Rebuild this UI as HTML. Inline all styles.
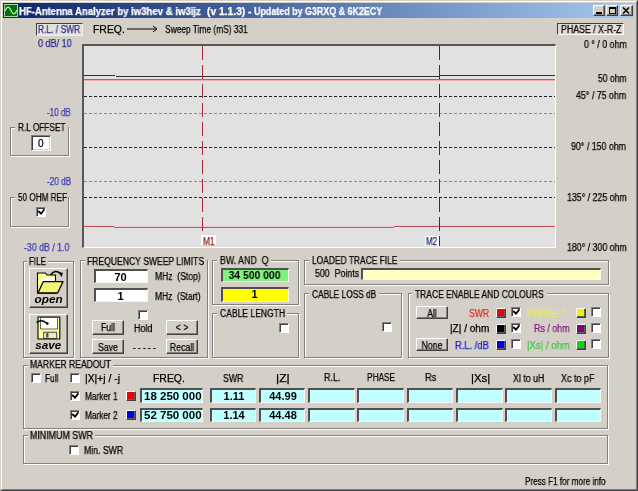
<!DOCTYPE html>
<html><head><meta charset="utf-8"><style>
*{box-sizing:border-box;margin:0;padding:0}
html,body{width:638px;height:491px;overflow:hidden;background:#d4d0c8;font-family:"Liberation Sans",sans-serif;font-size:10px;color:#000}
.a{position:absolute}
.L{position:absolute;white-space:pre;font-size:10px;line-height:12px;transform-origin:0 0;-webkit-text-stroke:0.25px currentColor;will-change:transform}
.g{position:absolute;border:1px solid #808080;box-shadow:inset 1px 1px 0 #fff,1px 1px 0 #fff}
.gb{position:absolute;background:#d4d0c8;height:4px}
.sk{position:absolute;border-top:1px solid #808080;border-left:1px solid #808080;border-right:1px solid #fff;border-bottom:1px solid #fff;box-shadow:inset 1px 1px 0 #404040,inset -1px -1px 0 #d4d0c8}
.btn{position:absolute;background:#d4d0c8;border-top:1px solid #fff;border-left:1px solid #fff;border-right:1px solid #404040;border-bottom:1px solid #404040;box-shadow:inset -1px -1px 0 #808080}
.cb{position:absolute;width:10px;height:10px;background:#fff;border-top:1px solid #808080;border-left:1px solid #808080;border-right:1px solid #fff;border-bottom:1px solid #fff;box-shadow:inset 1px 1px 0 #404040}
.sw{position:absolute;width:10px;height:10px;border-top:1px solid #fff;border-left:1px solid #fff;border-right:1px solid #404040;border-bottom:1px solid #404040;box-shadow:inset -1px -1px 0 #606060}
.tb{position:absolute;top:5px;height:11px;background:#d4d0c8;border-top:1px solid #fff;border-left:1px solid #fff;border-right:1px solid #404040;border-bottom:1px solid #404040;box-shadow:inset -1px -1px 0 #808080}
.ed{position:absolute;border-top:2px solid #505050;border-left:2px solid #505050;border-bottom:1px solid #f4f4f4;border-right:1px solid #f4f4f4;background:#c0ffff}
.bt{position:absolute;white-space:pre;font-weight:bold;font-size:11px;line-height:12px;text-align:center;will-change:transform}
</style></head><body>
<div class="a" style="left:0;top:0;width:638px;height:491px;border-top:1px solid #d4d0c8;border-left:1px solid #d4d0c8;border-right:1px solid #404040;border-bottom:1px solid #404040"></div>
<div class="a" style="left:1px;top:1px;width:636px;height:489px;border-top:1px solid #fff;border-left:1px solid #fff;border-right:1px solid #808080;border-bottom:1px solid #808080"></div>
<div class="a" style="left:3px;top:3px;width:631px;height:15px;background:linear-gradient(to right,#0a246a,#a6caf0)"></div>
<div class="a" style="left:4px;top:4px;width:14px;height:13px;background:#0b6a12;border:1px solid #9fd8a0"><svg class="a" style="left:0;top:0" width="12" height="11" viewBox="0 0 12 11"><path d="M0 6 C2 1,4 1,6 5.5 S10 10,12 5" stroke="#9cff7a" stroke-width="1.3" fill="none"/></svg></div>
<div class="tb" style="left:593px;width:12px"></div><div class="tb" style="left:606px;width:12px"></div><div class="tb" style="left:620px;width:13px"></div>
<svg class="a" style="left:593px;top:5px" width="40" height="11"><rect x="3" y="7" width="6" height="2" fill="#000"/><rect x="16.5" y="2.5" width="6" height="6" fill="none" stroke="#000"/><rect x="16" y="2" width="7" height="2" fill="#000"/><path d="M30 2.5 L36 8.5 M36 2.5 L30 8.5" stroke="#000" stroke-width="1.5"/></svg>
<div class="a" style="left:36px;top:23px;width:47px;height:13px;border-top:1px solid #404040;border-left:1px solid #404040;border-right:1px solid #f0f0f0;border-bottom:1px solid #f0f0f0;background:#e4e2dc"></div>
<div class="a" style="left:557px;top:23px;width:67px;height:12px;border-top:1px solid #404040;border-left:1px solid #404040;border-right:1px solid #fff;border-bottom:1px solid #fff;background:#dedad4"></div>
<svg class="a" style="left:126px;top:25px" width="34" height="8"><path d="M1 4 H31 M27 1 L31 4 L27 7" stroke="#000" stroke-width="1" fill="none"/></svg>
<div class="a" style="left:82px;top:44px;width:474px;height:204px;background:#e1e1e1;border-top:2px solid #5a5656;border-left:2px solid #5a5656;border-right:1px solid #fff;border-bottom:1px solid #fff"></div>
<svg class="a" style="left:0;top:0" width="638" height="491"><g stroke-width="1" shape-rendering="crispEdges">
<line x1="84" y1="96.5" x2="555" y2="96.5" stroke="#202020" stroke-dasharray="3 2"/>
<line x1="84" y1="147.5" x2="555" y2="147.5" stroke="#202020" stroke-dasharray="3 2"/>
<line x1="84" y1="197.5" x2="555" y2="197.5" stroke="#202020" stroke-dasharray="3 2"/>
<line x1="84" y1="113.5" x2="555" y2="113.5" stroke="#8080e0" stroke-dasharray="3 2"/>
<line x1="84" y1="181.5" x2="555" y2="181.5" stroke="#8080e0" stroke-dasharray="3 2"/>
<path d="M84 75.5 H115 M116 76.5 H439 M440 75.5 H555" stroke="#303030"/>
<line x1="84" y1="79.5" x2="555" y2="79.5" stroke="#a86868"/><line x1="84" y1="80.5" x2="555" y2="80.5" stroke="#e8b0b0"/>
<path d="M84 226.5 H114 M114 227.5 H394 M394 226.5 H555" stroke="#c85060"/><path d="M84 225.5 H114 M114 226.5 H394 M394 225.5 H555" stroke="#f0c8d0"/>
<line x1="202.5" y1="46" x2="202.5" y2="234" stroke="#a82838" stroke-dasharray="14 5"/>
<line x1="439.5" y1="46" x2="439.5" y2="234" stroke="#2020c0" stroke-dasharray="14 5"/>
<line x1="439.5" y1="236" x2="439.5" y2="246" stroke="#2020a0"/>
</g></svg>
<div class="a" style="left:201px;top:235px;width:15px;height:10px;background:#fff"></div>
<div class="a" style="left:425px;top:236px;width:14px;height:10px;background:#fff"></div>
<div class="g" style="left:10px;top:127px;width:59px;height:29px"></div><div class="gb" style="left:15px;top:126px;width:53px"></div>
<div class="sk" style="left:31px;top:135px;width:20px;height:16px;background:#fff"></div>
<div class="g" style="left:10px;top:197px;width:59px;height:30px"></div><div class="gb" style="left:15px;top:196px;width:53px"></div>
<div class="cb" style="left:36px;top:207px"></div><svg class="a" style="left:37px;top:208px" width="8" height="8"><path d="M1.2 3 L4 5.7 L7.4 1.2" stroke="#000" stroke-width="1.8" fill="none"/></svg>
<div class="g" style="left:23px;top:261px;width:51px;height:97px"></div><div class="gb" style="left:27px;top:260px;width:21px"></div>
<div class="btn" style="left:29px;top:268px;width:39px;height:40px"></div>
<div class="btn" style="left:29px;top:314px;width:39px;height:40px"></div>
<div class="g" style="left:80px;top:260px;width:128px;height:98px"></div><div class="gb" style="left:85px;top:259px;width:122px"></div>
<div class="ed" style="left:94px;top:269px;width:54px;height:14px;background:#fff"></div>
<div class="ed" style="left:94px;top:288px;width:54px;height:14px;background:#fff"></div>
<div class="cb" style="left:138px;top:310px"></div>
<div class="btn" style="left:92px;top:320px;width:32px;height:15px"></div>
<div class="btn" style="left:166px;top:320px;width:32px;height:15px"></div>
<div class="btn" style="left:92px;top:339px;width:32px;height:15px"></div>
<div class="btn" style="left:166px;top:339px;width:32px;height:15px"></div>
<div class="g" style="left:212px;top:260px;width:87px;height:45px"></div><div class="gb" style="left:217px;top:259px;width:54px"></div>
<div class="ed" style="left:221px;top:268px;width:68px;height:14px;background:#80f080"></div>
<div class="ed" style="left:221px;top:287px;width:68px;height:15px;background:#ffff00"></div>
<div class="g" style="left:212px;top:313px;width:87px;height:45px"></div><div class="gb" style="left:217px;top:312px;width:70px"></div>
<div class="cb" style="left:279px;top:323px"></div>
<div class="g" style="left:304px;top:260px;width:305px;height:25px"></div><div class="gb" style="left:309px;top:259px;width:91px"></div>
<div class="ed" style="left:361px;top:268px;width:240px;height:12px;background:#ffffc0"></div>
<div class="g" style="left:304px;top:293px;width:98px;height:65px"></div><div class="gb" style="left:309px;top:292px;width:70px"></div>
<div class="cb" style="left:382px;top:322px"></div>
<div class="g" style="left:408px;top:293px;width:201px;height:65px"></div><div class="gb" style="left:412px;top:292px;width:135px"></div>
<div class="btn" style="left:416px;top:306px;width:32px;height:13px"></div>
<div class="btn" style="left:416px;top:338px;width:32px;height:13px"></div>
<div class="sw" style="left:496px;top:308px;background:#f00000"></div>
<div class="cb" style="left:511px;top:307px"></div><svg class="a" style="left:512px;top:308px" width="8" height="8"><path d="M1.2 3 L4 5.7 L7.4 1.2" stroke="#000" stroke-width="1.8" fill="none"/></svg>
<div class="sw" style="left:576px;top:308px;background:#f0f000"></div>
<div class="cb" style="left:591px;top:307px"></div>
<div class="sw" style="left:496px;top:324px;background:#000"></div>
<div class="cb" style="left:511px;top:323px"></div><svg class="a" style="left:512px;top:324px" width="8" height="8"><path d="M1.2 3 L4 5.7 L7.4 1.2" stroke="#000" stroke-width="1.8" fill="none"/></svg>
<div class="sw" style="left:576px;top:324px;background:#800080"></div>
<div class="cb" style="left:591px;top:323px"></div>
<div class="sw" style="left:496px;top:340px;background:#0000f0"></div>
<div class="cb" style="left:511px;top:339px"></div>
<div class="sw" style="left:576px;top:340px;background:#00e000"></div>
<div class="cb" style="left:591px;top:339px"></div>
<div class="g" style="left:23px;top:365px;width:585px;height:64px"></div><div class="gb" style="left:28px;top:364px;width:85px"></div>
<div class="cb" style="left:31px;top:373px"></div>
<div class="cb" style="left:70px;top:373px"></div>
<div class="cb" style="left:70px;top:391px"></div><svg class="a" style="left:71px;top:392px" width="8" height="8"><path d="M1.2 3 L4 5.7 L7.4 1.2" stroke="#000" stroke-width="1.8" fill="none"/></svg>
<div class="cb" style="left:70px;top:410px"></div><svg class="a" style="left:71px;top:411px" width="8" height="8"><path d="M1.2 3 L4 5.7 L7.4 1.2" stroke="#000" stroke-width="1.8" fill="none"/></svg>
<div class="sw" style="left:126px;top:391px;background:#f00000"></div>
<div class="sw" style="left:126px;top:410px;background:#0000f0"></div>
<div class="ed" style="left:140px;top:388px;width:63px;height:15px;background:#c0ffff"></div>
<div class="ed" style="left:140px;top:408px;width:63px;height:14px;background:#c0ffff"></div>
<div class="ed" style="left:210px;top:388px;width:46px;height:15px;background:#c0ffff"></div>
<div class="ed" style="left:210px;top:408px;width:46px;height:14px;background:#c0ffff"></div>
<div class="ed" style="left:259px;top:388px;width:46px;height:15px;background:#c0ffff"></div>
<div class="ed" style="left:259px;top:408px;width:46px;height:14px;background:#c0ffff"></div>
<div class="ed" style="left:308px;top:388px;width:47px;height:15px;background:#c0ffff"></div>
<div class="ed" style="left:308px;top:408px;width:47px;height:14px;background:#c0ffff"></div>
<div class="ed" style="left:357px;top:388px;width:47px;height:15px;background:#c0ffff"></div>
<div class="ed" style="left:357px;top:408px;width:47px;height:14px;background:#c0ffff"></div>
<div class="ed" style="left:407px;top:388px;width:46px;height:15px;background:#c0ffff"></div>
<div class="ed" style="left:407px;top:408px;width:46px;height:14px;background:#c0ffff"></div>
<div class="ed" style="left:456px;top:388px;width:47px;height:15px;background:#c0ffff"></div>
<div class="ed" style="left:456px;top:408px;width:47px;height:14px;background:#c0ffff"></div>
<div class="ed" style="left:505px;top:388px;width:47px;height:15px;background:#c0ffff"></div>
<div class="ed" style="left:505px;top:408px;width:47px;height:14px;background:#c0ffff"></div>
<div class="ed" style="left:555px;top:388px;width:46px;height:15px;background:#c0ffff"></div>
<div class="ed" style="left:555px;top:408px;width:46px;height:14px;background:#c0ffff"></div>
<div class="g" style="left:23px;top:435px;width:585px;height:29px"></div><div class="gb" style="left:28px;top:434px;width:67px"></div>
<div class="cb" style="left:69px;top:445px"></div>
<div class="bt" style="left:93px;top:271px;width:55px">70</div>
<div class="bt" style="left:93px;top:290px;width:55px">1</div>
<div class="bt" style="left:221px;top:269px;width:67px;transform:scaleX(.94)">34 500 000</div>
<div class="bt" style="left:221px;top:288px;width:67px">1</div>
<div class="L" style="left:38px;top:138px">0</div>
<div class="L" style="left:92px;top:322px;width:32px;text-align:center;transform:scaleX(.87);transform-origin:50% 0">Full</div>
<div class="L" style="left:166px;top:322px;width:32px;text-align:center;transform:scaleX(.87);transform-origin:50% 0">&lt; ></div>
<div class="L" style="left:92px;top:342px;width:32px;text-align:center;transform:scaleX(.87);transform-origin:50% 0">Save</div>
<div class="L" style="left:166px;top:342px;width:32px;text-align:center;transform:scaleX(.87);transform-origin:50% 0">Recall</div>
<div class="L" style="left:416px;top:308px;width:32px;text-align:center;transform:scaleX(.87);transform-origin:50% 0">All</div>
<div class="L" style="left:416px;top:340px;width:32px;text-align:center;transform:scaleX(.87);transform-origin:50% 0">None</div>
<div class="bt" style="left:143.5px;top:390px;font-size:11.5px;line-height:13px">18 250 000</div>
<div class="bt" style="left:143.5px;top:409px;font-size:11.5px;line-height:13px">52 750 000</div>
<div class="bt" style="left:211px;top:390px;width:46px">1.11</div>
<div class="bt" style="left:211px;top:409px;width:46px">1.14</div>
<div class="bt" style="left:260px;top:390px;width:46px">44.99</div>
<div class="bt" style="left:260px;top:409px;width:46px">44.48</div>
<svg class="a" style="left:30px;top:269px;will-change:transform" width="38" height="38">
<path d="M7.5 4 h8 l1.5 2 h8.5 v18 h-18 z" fill="#ffff98" stroke="#000" stroke-width="1.1"/>
<path d="M11 8.5 h13.5 v4.5 h-13.5z" fill="#fff"/>
<path d="M8 24 L13.2 12.7 H33 L27.6 24 Z" fill="#f4f478" stroke="#000" stroke-width="1.3" stroke-linejoin="round"/>
<path d="M20.4 6.2 Q25 -0.5 30.6 4.6" stroke="#000" stroke-width="1.5" fill="none"/><path d="M28.6 3.6 L33 3.8 L31.6 8z" fill="#000"/>
<text x="18.6" y="33.7" font-family="Liberation Sans" font-weight="bold" font-style="italic" font-size="10.5" text-anchor="middle" textLength="28" lengthAdjust="spacingAndGlyphs">open</text>
</svg>
<svg class="a" style="left:30px;top:315px;will-change:transform" width="38" height="38">
<path d="M8 2 h21.8 v22 h-21.8 z" fill="#ffff98" stroke="#000" stroke-width="1.1"/>
<path d="M10.5 2.5 h17 v11.5 h-17z" fill="#fff" stroke="#000" stroke-width=".6"/>
<path d="M13.7 17.2 h13 v6.3 h-13z" fill="#e8e8d8" stroke="#000" stroke-width=".7"/>
<path d="M16.2 18 h2.2 v4.6 h-2.2z" fill="#505050"/>
<path d="M6.5 7.5 Q12 3.5 17 8.5" stroke="#000" stroke-width="1.3" fill="none"/><circle cx="17.3" cy="8.5" r="1.3"/>
<text x="18.2" y="33.7" font-family="Liberation Sans" font-weight="bold" font-style="italic" font-size="10.5" text-anchor="middle" textLength="26" lengthAdjust="spacingAndGlyphs">save</text>
</svg>
<div class="L" style="left:19.00px;top:6.00px;color:#fff;transform:scaleX(0.9497);font-weight:bold;">HF-Antenna Analyzer by </div>
<div class="L" style="left:131.40px;top:6.00px;color:#fff;transform:scaleX(0.9597);font-weight:bold;">iw3hev &amp; iw3ijz  </div>
<div class="L" style="left:206.60px;top:6.00px;color:#fff;transform:scaleX(1.0276);font-weight:bold;">(v 1.1.3) - </div>
<div class="L" style="left:254.00px;top:6.00px;color:#fff;transform:scaleX(0.8908);font-weight:bold;">Updated by G3RXQ &amp; 6K2ECY</div>
<div class="L" style="left:38.00px;top:24.00px;color:#2c2c88;transform:scaleX(0.8437);">R.L. / SWR</div>
<div class="L" style="left:37.70px;top:38.00px;color:#2c2c88;transform:scaleX(0.9021);">0 dB/ 10</div>
<div class="L" style="left:92.70px;top:24.00px;color:#000;transform:scaleX(1.0410);">FREQ.</div>
<div class="L" style="left:164.60px;top:24.00px;color:#000;transform:scaleX(0.8368);">Sweep Time (mS) 331</div>
<div class="L" style="left:561.00px;top:24.00px;color:#000;transform:scaleX(0.8766);">PHASE / X-R-Z</div>
<div class="L" style="left:583.80px;top:39.00px;color:#000;transform:scaleX(0.8829);">0 ° / 0 ohm</div>
<div class="L" style="left:598.00px;top:73.00px;color:#000;transform:scaleX(0.8569);">50 ohm</div>
<div class="L" style="left:576.40px;top:90.00px;color:#000;transform:scaleX(0.8835);">45° / 75 ohm</div>
<div class="L" style="left:571.30px;top:141.00px;color:#000;transform:scaleX(0.8816);">90° / 150 ohm</div>
<div class="L" style="left:566.50px;top:192.00px;color:#000;transform:scaleX(0.8801);">135° / 225 ohm</div>
<div class="L" style="left:566.50px;top:242.00px;color:#000;transform:scaleX(0.8801);">180° / 300 ohm</div>
<div class="L" style="left:47.30px;top:107.00px;color:#3a3ab8;transform:scaleX(0.8056);">-10 dB</div>
<div class="L" style="left:47.00px;top:176.00px;color:#3a3ab8;transform:scaleX(0.8190);">-20 dB</div>
<div class="L" style="left:24.00px;top:242.00px;color:#3a3ab8;transform:scaleX(0.8765);">-30 dB / 1.0</div>
<div class="L" style="left:18.30px;top:122.00px;color:#000;transform:scaleX(0.8271);">R.L OFFSET</div>
<div class="L" style="left:17.60px;top:192.00px;color:#000;transform:scaleX(0.8163);">50 OHM REF</div>
<div class="L" style="left:202.50px;top:236.00px;color:#8a2020;transform:scaleX(0.8374);">M1</div>
<div class="L" style="left:426.00px;top:236.00px;color:#20207a;transform:scaleX(0.8025);">M2</div>
<div class="L" style="left:29.40px;top:256.00px;color:#000;transform:scaleX(0.7973);">FILE</div>
<div class="L" style="left:87.30px;top:256.00px;color:#000;transform:scaleX(0.8590);">FREQUENCY SWEEP LIMITS</div>
<div class="L" style="left:154.50px;top:271.00px;color:#000;transform:scaleX(0.8546);">MHz  (Stop)</div>
<div class="L" style="left:154.50px;top:291.00px;color:#000;transform:scaleX(0.8458);">MHz  (Start)</div>
<div class="L" style="left:134.40px;top:323.00px;color:#000;transform:scaleX(0.8948);">Hold</div>
<div class="L" style="left:132.80px;top:342.00px;color:#000;transform:scaleX(0.8165);">- - - - -</div>
<div class="L" style="left:219.60px;top:255.00px;color:#000;transform:scaleX(0.8820);">BW. AND  Q</div>
<div class="L" style="left:219.60px;top:308.00px;color:#000;transform:scaleX(0.8549);">CABLE LENGTH</div>
<div class="L" style="left:311.60px;top:255.00px;color:#000;transform:scaleX(0.8410);">LOADED TRACE FILE</div>
<div class="L" style="left:314.60px;top:268.00px;color:#000;transform:scaleX(0.8814);">500  Points</div>
<div class="L" style="left:311.60px;top:289.00px;color:#000;transform:scaleX(0.8313);">CABLE LOSS dB</div>
<div class="L" style="left:415.20px;top:289.00px;color:#000;transform:scaleX(0.8487);">TRACE ENABLE AND COLOURS</div>
<div class="L" style="left:469.00px;top:308.00px;color:#e03030;transform:scaleX(0.8655);">SWR</div>
<div class="L" style="left:450.00px;top:323.00px;color:#000;transform:scaleX(1.0061);">|Z| / ohm</div>
<div class="L" style="left:455.00px;top:340.00px;color:#2020c8;transform:scaleX(0.9326);">R.L. /dB</div>
<div class="L" style="left:527.40px;top:308.00px;color:#e8e860;transform:scaleX(0.9366);">PHASE °</div>
<div class="L" style="left:533.70px;top:323.00px;color:#802080;transform:scaleX(0.8896);">Rs / ohm</div>
<div class="L" style="left:526.50px;top:340.00px;color:#40c840;transform:scaleX(0.9589);">|Xs| / ohm</div>
<div class="L" style="left:29.80px;top:359.00px;color:#000;transform:scaleX(0.8575);">MARKER READOUT</div>
<div class="L" style="left:45.40px;top:373.00px;color:#000;transform:scaleX(0.8306);">Full</div>
<div class="L" style="left:84.90px;top:373.00px;color:#000;transform:scaleX(1.0360);">|X|+j / -j</div>
<div class="L" style="left:84.90px;top:391.00px;color:#000;transform:scaleX(0.8247);">Marker 1</div>
<div class="L" style="left:84.90px;top:410.00px;color:#000;transform:scaleX(0.8247);">Marker 2</div>
<div class="L" style="left:152.60px;top:373.00px;color:#000;transform:scaleX(1.0410);">FREQ.</div>
<div class="L" style="left:223.10px;top:373.00px;color:#000;transform:scaleX(0.8785);">SWR</div>
<div class="L" style="left:276.00px;top:373.00px;color:#000;transform:scaleX(1.2143);">|Z|</div>
<div class="L" style="left:323.80px;top:372.00px;color:#000;transform:scaleX(0.8997);">R.L.</div>
<div class="L" style="left:366.50px;top:372.00px;color:#000;transform:scaleX(0.8267);">PHASE</div>
<div class="L" style="left:425.40px;top:372.00px;color:#000;transform:scaleX(0.9246);">Rs</div>
<div class="L" style="left:470.80px;top:373.00px;color:#000;transform:scaleX(1.1434);">|Xs|</div>
<div class="L" style="left:512.60px;top:373.00px;color:#000;transform:scaleX(0.8826);">Xl to uH</div>
<div class="L" style="left:560.60px;top:373.00px;color:#000;transform:scaleX(0.8969);">Xc to pF</div>
<div class="L" style="left:29.80px;top:430.00px;color:#000;transform:scaleX(0.8832);">MINIMUM SWR</div>
<div class="L" style="left:84.00px;top:445.00px;color:#000;transform:scaleX(0.8710);">Min. SWR</div>
<div class="L" style="left:525.00px;top:476.00px;color:#000;transform:scaleX(0.8152);">Press F1 for more info</div>
</body></html>
